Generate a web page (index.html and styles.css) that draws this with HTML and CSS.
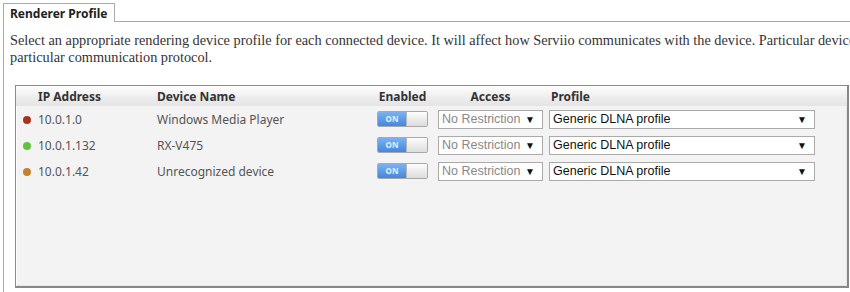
FILE: index.html
```html
<!DOCTYPE HTML>
<html lang="en">
<head>
	<meta charset="utf-8">
	<link rel="stylesheet" href="styles.css">
</head>
<body>
	<div class="tabs">
		<span class="tab">Renderer Profile</span>
	</div>
	<div class="panel">
		<p class="intro">Select an appropriate rendering device profile for each connected device. It will affect how Serviio communicates with the device. Particular devices may require a<br>particular communication protocol.</p>
		<div class="devices">
			<div class="row head">
				<span class="ip">IP Address</span>
				<span>Device Name</span>
				<span class="center">Enabled</span>
				<span class="center">Access</span>
				<span class="profile-head">Profile</span>
			</div>
			<div class="row">
				<span class="ip"><i class="dot red"></i>10.0.1.0</span>
				<span>Windows Media Player</span>
				<span class="toggle"><b>ON</b><em></em></span>
				<span class="select access">No Restriction<i>&#9660;</i></span>
				<span class="select profile">Generic DLNA profile<i>&#9660;</i></span>
			</div>
			<div class="row">
				<span class="ip"><i class="dot green"></i>10.0.1.132</span>
				<span>RX-V475</span>
				<span class="toggle"><b>ON</b><em></em></span>
				<span class="select access">No Restriction<i>&#9660;</i></span>
				<span class="select profile">Generic DLNA profile<i>&#9660;</i></span>
			</div>
			<div class="row">
				<span class="ip"><i class="dot orange"></i>10.0.1.42</span>
				<span>Unrecognized device</span>
				<span class="toggle"><b>ON</b><em></em></span>
				<span class="select access">No Restriction<i>&#9660;</i></span>
				<span class="select profile">Generic DLNA profile<i>&#9660;</i></span>
			</div>
		</div>
	</div>
</body>
</html>
```

FILE: styles.css
```css
*{padding:0;margin:0;box-sizing:border-box;}
body{background:#fff;overflow:hidden;padding:3px 0 0 3px;font-family:"Noto Sans","DejaVu Sans",Verdana,sans-serif;font-size:12px;color:#555;}
.tabs{border-bottom:1px solid #aaa;height:19px;}
.tab{display:inline-block;height:19px;padding:1px 7px 0 6px;border:1px solid #aaa;border-bottom:none;background:#fff;
font-weight:bold;font-size:12px;color:#222;}
.panel{border-left:1px solid #aaa;height:280px;padding:10px 0 0 6px;}
.intro{font-family:"Liberation Serif","Times New Roman",serif;font-size:14.3px;line-height:17px;color:#333;white-space:nowrap;}
.devices{margin:19px 0 0 5px;width:834px;height:203px;background:#f3f3f3;
border:1px solid #8c8c8c;border-right:2px solid #888;border-bottom:2px solid #888;
box-shadow:inset 1px 1px 0 #fdfdfd,inset -1px -1px 0 #e6e6e6;}
.row{display:grid;grid-template-columns:141px 220px 61px 111px 1fr;align-items:center;height:26px;}
.row.head{height:20px;font-weight:bold;color:#333;background:linear-gradient(#fefefe,#ececec 60%,#e4e4e4);}
.ip{padding-left:22px;position:relative;}
.center{text-align:center;padding-right:10px;}
.row.head .center:nth-child(4){padding-right:6px;}
.profile-head{padding-left:2px;}
.dot{position:absolute;left:7px;top:5px;width:8px;height:8px;border-radius:50%;}
.red{background:#a8321a;}
.green{background:#5fc43a;}
.orange{background:#c2822f;}
.toggle{display:flex;width:51px;height:16px;border:1px solid #a8a8a8;border-radius:2px;overflow:hidden;}
.toggle b{width:28px;background:linear-gradient(#7ab2f2,#4686dc);color:#e4efff;font-size:8px;line-height:14px;text-align:center;}
.toggle em{flex:1;background:linear-gradient(#fdfdfd,#dcdcdc);border-left:1px solid #b5b5b5;}
.select{display:flex;justify-content:space-between;align-items:center;height:19px;background:#fff;border:1px solid #aaa;
font-family:"Liberation Sans",Arial,sans-serif;font-size:12.5px;padding:0 7px 0 3px;}
.select i{font-style:normal;font-size:10px;color:#111;}
.access{width:105px;color:#888;}
.profile{width:266px;color:#111;}
```
